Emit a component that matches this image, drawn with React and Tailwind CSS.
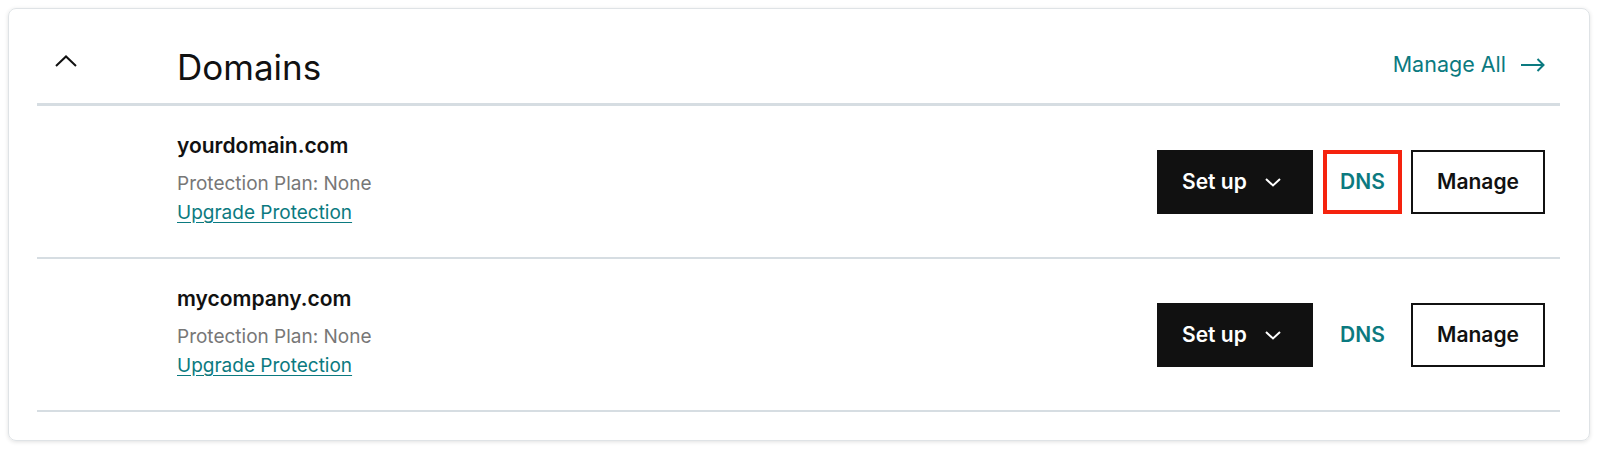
import React from 'react';

const teal = 'text-[#0b7a80]';

function ChevronUp() {
    return (
        <svg width="22" height="12" viewBox="0 0 22 12" fill="none">
            <path d="M1 11L11 1.5L21 11" stroke="#111" strokeWidth="2" />
        </svg>
    );
}

function ChevronDown() {
    return (
        <svg width="16" height="9" viewBox="0 0 16 9" fill="none">
            <path d="M1 1L8 7.5L15 1" stroke="#fff" strokeWidth="2" />
        </svg>
    );
}

function ArrowRight() {
    return (
        <svg width="24" height="14" viewBox="0 0 24 14" fill="none">
            <path d="M0 7H22.5M16.5 1L22.5 7L16.5 13" stroke="#0b7a80" strokeWidth="2" />
        </svg>
    );
}

function DomainRow({ name, highlight }) {
    return (
        <div className="flex items-center h-[153px] pl-[140px] pr-[15px] border-b-2 border-[#d6dde2]">
            <div className="flex flex-col pb-[4px]">
                <span className="text-[21px] leading-[28px] font-semibold text-[#111]">{name}</span>
                <span className="text-[19px] leading-[30px] text-[#777] mt-[9px]">Protection Plan: None</span>
                <a href="#" className={`text-[19px] leading-[28px] underline underline-offset-[3px] ${teal}`}>Upgrade Protection</a>
            </div>
            <div className="ml-auto flex items-center">
                <button className="flex items-center h-[64px] w-[156px] bg-[#111] text-white text-[21px] font-semibold pl-[25px]">
                    <span>Set up</span>
                    <span className="ml-[18px] mt-[2px]"><ChevronDown /></span>
                </button>
                <button className={`ml-[10px] h-[64px] w-[79px] border-4 ${highlight ? 'border-[#f5230e]' : 'border-transparent'} text-[21px] font-semibold ${teal}`}>
                    DNS
                </button>
                <button className="ml-[9px] h-[64px] w-[134px] border-2 border-[#111] text-[21px] font-semibold text-[#111]">
                    Manage
                </button>
            </div>
        </div>
    );
}

export default function App() {
    return (
        <div className="w-[1600px] h-[450px] bg-white pt-2 pl-2 pr-[10px] font-['Inter',sans-serif]">
            <div className="h-[433px] border border-[#dfe3e6] rounded-lg shadow-[0_1px_4px_rgba(0,0,0,0.12)] pl-[28px] pr-[29px]">
                <div className="flex items-start h-[97px] border-b-[3px] border-[#d6dde2]">
                    <div className="ml-[18px] mt-[46px]">
                        <ChevronUp />
                    </div>
                    <h2 className="ml-[100px] mt-[36px] text-[35px] leading-[44px] font-normal text-[#111]">Domains</h2>
                    <a href="#" className={`ml-auto mr-[15px] mt-[40px] flex items-center text-[21.5px] leading-[30px] ${teal}`}>
                        Manage All
                        <span className="ml-[15px] mt-[2px]"><ArrowRight /></span>
                    </a>
                </div>
                <DomainRow name="yourdomain.com" highlight />
                <DomainRow name="mycompany.com" />
            </div>
        </div>
    );
}
